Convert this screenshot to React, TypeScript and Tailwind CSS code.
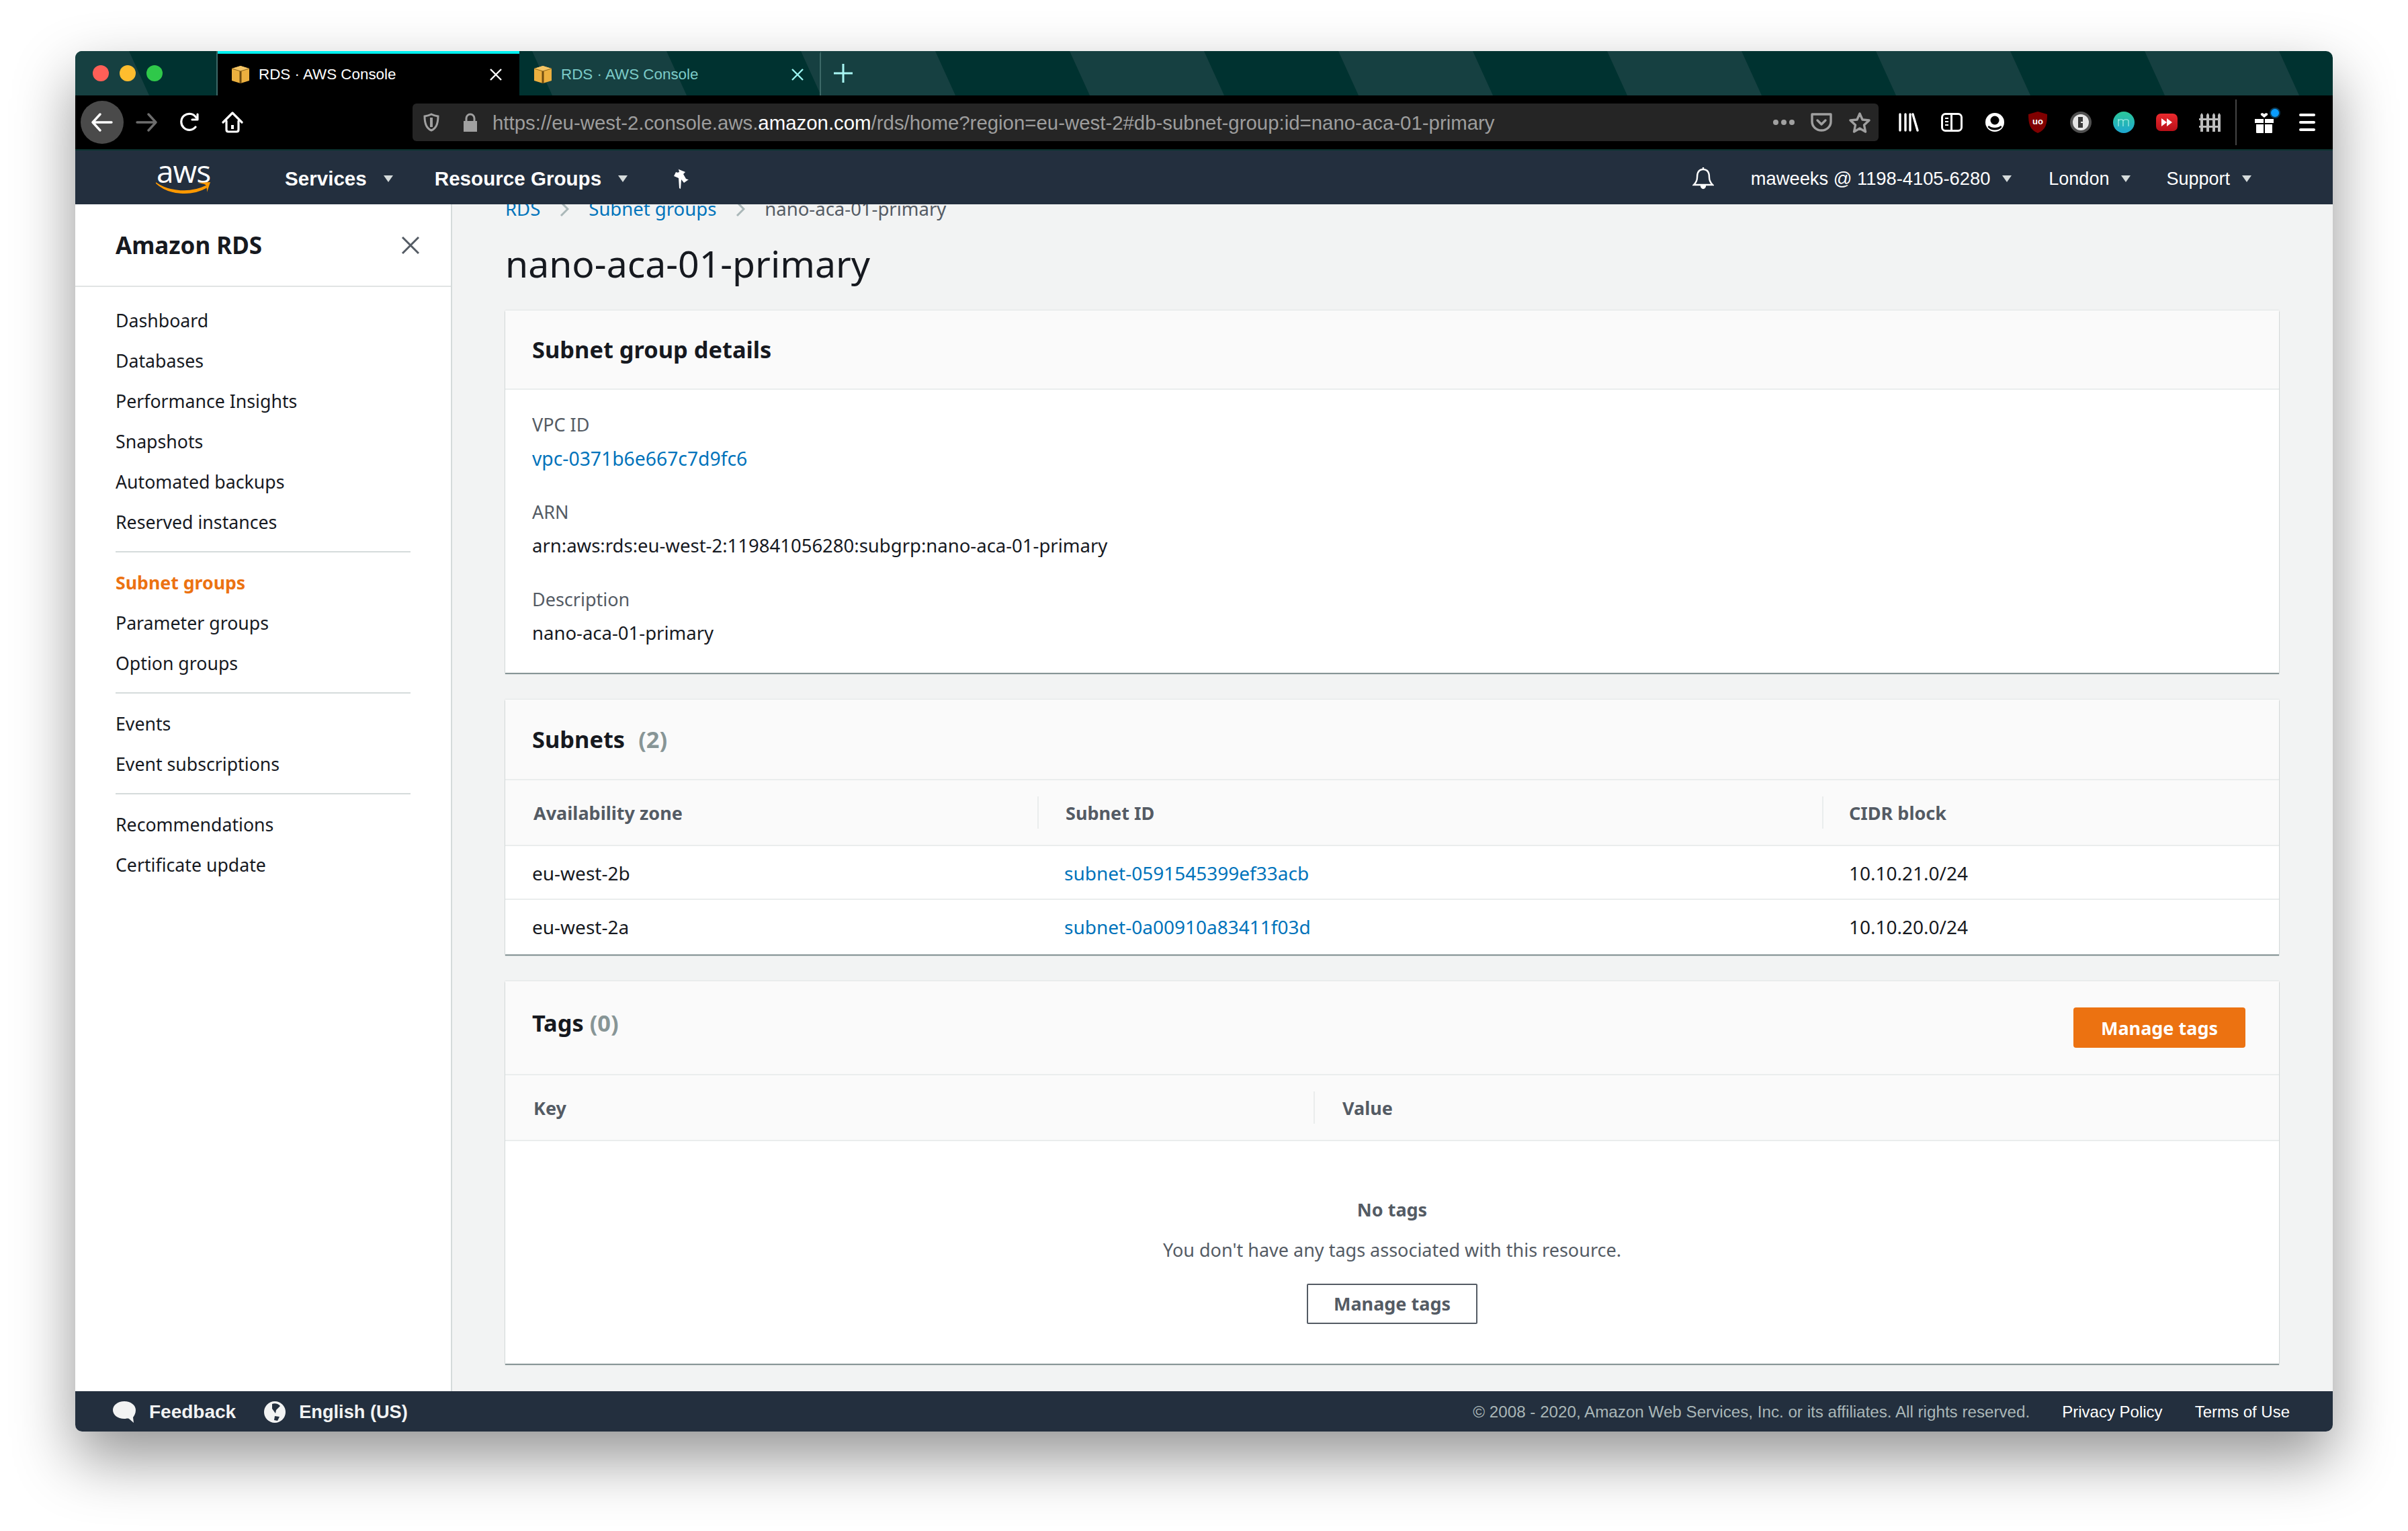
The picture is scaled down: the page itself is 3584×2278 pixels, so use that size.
const stripes = Array.from({ length: 9 }, (_, i) => -120 + i * 400);

const sideGroups = [
  ["Dashboard", "Databases", "Performance Insights", "Snapshots", "Automated backups", "Reserved instances"],
  ["Subnet groups", "Parameter groups", "Option groups"],
  ["Events", "Event subscriptions"],
  ["Recommendations", "Certificate update"],
];

const subnets = [
  { az: "eu-west-2b", id: "subnet-0591545399ef33acb", cidr: "10.10.21.0/24" },
  { az: "eu-west-2a", id: "subnet-0a00910a83411f03d", cidr: "10.10.20.0/24" },
];

const Caret = ({ className = "" }: { className?: string }) => (
  <svg viewBox="0 0 16 10" className={`h-[10px] w-[16px] ${className}`}>
    <path d="M1 0h14L8 10z" fill="#d5dbdb" />
  </svg>
);

const BoxIcon = () => (
  <svg viewBox="0 0 28 28" className="h-[28px] w-[28px] shrink-0">
    <path d="M14 1 27 5v18l-13 4-13-4V5z" fill="#ecb03f" />
    <path d="M14 1 27 5l-13 4L1 5z" fill="#f5c565" />
    <path d="M12.500 9h3v18h-3z" fill="#6f4c10" />
    <path d="M1 5l13 4L27 5" fill="none" stroke="#8f6518" strokeWidth="1" />
  </svg>
);

const CloseIcon = ({ color }: { color: string }) => (
  <svg viewBox="0 0 20 20" className="h-[20px] w-[20px]" fill="none" stroke={color} strokeWidth="2.4">
    <path d="M2 2l16 16M18 2 2 18" />
  </svg>
);

const Tab = ({ active }: { active?: boolean }) => (
  <div
    className={`flex h-full w-[449px] items-center border-t-4 ${
      active
        ? "border-t-[#00f0f0] bg-black text-white"
        : "border-t-transparent border-r-2 border-r-[#3c6867] text-[#7ccbc8]"
    }`}
  >
    <div className={`mr-[13px] flex items-center ${active ? "ml-[20px]" : "ml-[21px]"}`}>
      <BoxIcon />
    </div>
    <span className={`font-['Liberation_Sans',sans-serif] text-[22.400px] leading-none ${active ? "w-[343px]" : "w-[342px]"}`}>RDS · AWS Console</span>
    <CloseIcon color={active ? "#ffffff" : "#9af5f2"} />
  </div>
);

const ToolSlot = ({ children }: { children: React.ReactNode }) => (
  <div className="flex h-[64px] w-[64px] items-center justify-center">{children}</div>
);

const Browser = () => (
  <>
    <div className="relative flex h-[66px] shrink-0 bg-[#003230]">
      <svg className="absolute inset-0 h-full w-full" viewBox="0 0 3360 66" preserveAspectRatio="none">
        {stripes.map((x) => (
          <polygon key={x} points={`${x},0 ${x + 200},0 ${x + 230},66 ${x + 30},66`} fill="#164041" />
        ))}
      </svg>
      <div className="relative flex h-full items-center">
        <div className="flex w-[212px] items-center gap-[16px] self-stretch border-r-2 border-[#3c6867] pl-[26px]">
          <span className="h-[24px] w-[24px] rounded-full bg-[#ff5f57]" />
          <span className="h-[24px] w-[24px] rounded-full bg-[#ffbd2e]" />
          <span className="h-[24px] w-[24px] rounded-full bg-[#2fc84a]" />
        </div>
        <Tab active />
        <Tab />
        <svg viewBox="0 0 28 28" className="ml-[19px] h-[28px] w-[28px]" stroke="#a8f6f3" strokeWidth="3">
          <path d="M14 0v28M0 14h28" />
        </svg>
      </div>
    </div>
    <div className="flex h-[80px] shrink-0 items-center bg-black pl-[8px]">
      <div className="flex h-[64px] w-[64px] items-center justify-center rounded-full bg-[#4a4a4a]">
        <svg viewBox="0 0 32 28" className="h-[28px] w-[32px]" fill="none" stroke="#fff" strokeWidth="3.4" strokeLinecap="round" strokeLinejoin="round">
          <path d="M30 14H2M13 2 2 14l11 12" />
        </svg>
      </div>
      <div className="ml-[2px]">
        <ToolSlot>
          <svg viewBox="0 0 32 28" className="h-[28px] w-[32px]" fill="none" stroke="#6d6d6d" strokeWidth="3.4" strokeLinecap="round" strokeLinejoin="round">
            <path d="M2 14h28M19 2l11 12-11 12" />
          </svg>
        </ToolSlot>
      </div>
      <ToolSlot>
        <svg viewBox="0 0 30 30" className="h-[30px] w-[30px]" fill="none" stroke="#fff" strokeWidth="3.2" strokeLinecap="round" strokeLinejoin="round">
          <path d="M24 22a12 12 0 1 1 1-14" />
          <path d="M27 3v8h-8" />
        </svg>
      </ToolSlot>
      <ToolSlot>
        <svg viewBox="0 0 32 32" className="h-[32px] w-[32px]" fill="none" stroke="#fff" strokeWidth="3.2" strokeLinecap="round" strokeLinejoin="round">
          <path d="M2 16 16 2l14 14" />
          <path d="M7 14v13c0 2 1 3 3 3h12c2 0 3-1 3-3V14" />
          <rect x="14" y="20" width="4" height="6" fill="#fff" stroke="none" />
        </svg>
      </ToolSlot>
      <div className="ml-[236px] flex h-[56px] w-[2182px] items-center rounded-[6px] bg-[#252525] pl-[16px]">
        <svg viewBox="0 0 24 28" className="h-[28px] w-[24px]" fill="none" stroke="#a0a0a0" strokeWidth="3">
          <path d="M12 2c4 2 6 2.500 10 3 0 10-2 18-10 21C4 23 2 15 2 5c4-.5 6-1 10-3z" />
          <path d="M12 7v14" strokeWidth="4" />
        </svg>
        <svg viewBox="0 0 24 28" className="ml-[34px] h-[28px] w-[24px]">
          <path d="M2 12h20v16H2z" fill="#a0a0a0" />
          <path d="M6 13V8a6 6 0 0 1 12 0v5" fill="none" stroke="#a0a0a0" strokeWidth="3" />
        </svg>
        <span className="ml-[21px] flex-1 pt-[1px] font-['Liberation_Sans',sans-serif] text-[29.400px] leading-none whitespace-nowrap text-[#9d9d9d]">
          https://eu-west-2.console.aws.<span className="text-white">amazon.com</span>/rds/home?region=eu-west-2#db-subnet-group:id=nano-aca-01-primary
        </span>
        <div className="mr-[12px] flex items-center">
          <div className="flex gap-[4px]">
            <span className="h-[8px] w-[8px] rounded-full bg-[#a0a0a0]" />
            <span className="h-[8px] w-[8px] rounded-full bg-[#a0a0a0]" />
            <span className="h-[8px] w-[8px] rounded-full bg-[#a0a0a0]" />
          </div>
          <svg viewBox="0 0 32 28" className="ml-[24px] h-[28px] w-[32px]" fill="none" stroke="#a0a0a0" strokeWidth="3.4" strokeLinecap="round" strokeLinejoin="round">
            <path d="M2 2h28v11a14 13 0 0 1-28 0z" />
            <path d="M10 11l6 6 6-6" />
          </svg>
          <svg viewBox="0 0 32 32" className="ml-[25px] h-[32px] w-[32px]" fill="none" stroke="#a0a0a0" strokeWidth="3.4" strokeLinejoin="round">
            <path d="M16 3l4 9 10 1-7.500 7 2 10-8.500-5-8.500 5 2-10L2 13l10-1z" />
          </svg>
        </div>
      </div>
      <div className="ml-[13px] flex items-center">
        <ToolSlot>
          <svg viewBox="0 0 30 28" className="h-[28px] w-[30px]" fill="none" stroke="#fff" strokeWidth="3.4" strokeLinecap="round">
            <path d="M2 2v24M10 2v24M17 2v24M21 2l7 24" />
          </svg>
        </ToolSlot>
        <ToolSlot>
          <svg viewBox="0 0 32 28" className="h-[28px] w-[32px]" fill="none" stroke="#fff" strokeWidth="3">
            <rect x="1.500" y="1.500" width="29" height="25" rx="5" />
            <path d="M15.500 2v24" />
            <path d="M6 8h5M6 13h5M6 18h5" strokeWidth="2" />
          </svg>
        </ToolSlot>
        <ToolSlot>
          <svg viewBox="0 0 28 28" className="h-[28px] w-[28px]" fill="#fff">
            <circle cx="14" cy="14" r="14" />
            <circle cx="14" cy="11" r="6.500" fill="#000" />
            <path d="M5 19c4 4 14 4 18 0l1.500 2c-5 6-16 6-21 0z" fill="#000" />
          </svg>
        </ToolSlot>
        <ToolSlot>
          <svg viewBox="0 0 28 32" className="h-[32px] w-[28px]">
            <path d="M14 0l14 4c0 14-2 23-14 28C2 27 0 18 0 4z" fill="#800000" />
            <text x="14" y="19" textAnchor="middle" fontSize="13" fontWeight="700" fill="#fff" fontFamily="Liberation Sans">uo</text>
          </svg>
        </ToolSlot>
        <ToolSlot>
          <svg viewBox="0 0 32 32" className="h-[32px] w-[32px]">
            <circle cx="16" cy="16" r="16" fill="#505050" />
            <circle cx="16" cy="16" r="12" fill="#e6e6e6" />
            <path d="M12 8h7v7h-3v2h3v7h-7z" fill="#3a3a3a" />
          </svg>
        </ToolSlot>
        <ToolSlot>
          <svg viewBox="0 0 32 32" className="h-[32px] w-[32px]">
            <defs>
              <linearGradient id="mDisc" x1="0" y1="0" x2="0" y2="1">
                <stop offset="0" stopColor="#2cc79a" />
                <stop offset="1" stopColor="#1ea7d0" />
              </linearGradient>
            </defs>
            <circle cx="16" cy="16" r="16" fill="url(#mDisc)" />
            <path d="M8 22v-11M8 14c1-3 7-3 7 0v8M15 14c1-3 8-3 8 0v8" fill="none" stroke="#a8eee8" strokeWidth="1.200" />
          </svg>
        </ToolSlot>
        <ToolSlot>
          <svg viewBox="0 0 32 26" className="h-[26px] w-[32px]">
            <defs>
              <linearGradient id="ytRed" x1="0" y1="0" x2="0" y2="1">
                <stop offset="0" stopColor="#ec2a2e" />
                <stop offset="1" stopColor="#b80f18" />
              </linearGradient>
            </defs>
            <rect width="32" height="26" rx="7" fill="url(#ytRed)" />
            <path d="M8 7l8 6-8 6zM16 7l8 6-8 6z" fill="#fff" />
          </svg>
        </ToolSlot>
        <ToolSlot>
          <svg viewBox="0 0 32 28" className="h-[28px] w-[32px]" fill="#bdbdbd">
            <path d="M2 3l2-3 2 3v25H2zM11 3l2-3 2 3v25h-4zM20 3l2-3 2 3v25h-4zM28 3l2-3 2 3v25h-4zM0 8h32v3H0zM0 19h32v3H0z" />
          </svg>
        </ToolSlot>
        <div className="ml-[6px] h-[68px] w-[2px] bg-[#444444]" />
        <div className="relative ml-[9px] flex h-[64px] w-[64px] items-center justify-center">
          <svg viewBox="0 0 28 30" className="mt-[2px] h-[30px] w-[28px]" fill="#fff">
            <path d="M0 9h13v6H0zM15 9h13v6H15zM2 17h11v13H3c-1 0-1-1-1-1zM15 17h11v12s0 1-1 1H15z" />
            <path d="M14 7C10 4 8 3 9 1c1-1 4-1 5 1 1-2 4-2 5-1 1 2-1 3-5 6z" />
          </svg>
          <span className="absolute right-[10px] top-[12px] h-[12px] w-[12px] rounded-full bg-[#0a9dff] shadow-[0_0_0_2px_#0c3a55]" />
        </div>
        <div className="flex w-[64px] flex-col items-center gap-[7px]">
          <span className="h-[4px] w-[24px] rounded-full bg-white" />
          <span className="h-[4px] w-[24px] rounded-full bg-white" />
          <span className="h-[4px] w-[24px] rounded-full bg-white" />
        </div>
      </div>
    </div>
  </>
);

const TopNav = () => (
  <div className="relative z-10 flex h-[82px] shrink-0 items-center border-t-2 border-[#0b3331] bg-[#232f3e] pt-[4px] font-['Liberation_Sans',sans-serif] text-white">
    <div className="-mt-[4px] ml-[120px] flex w-[82px] flex-col items-center">
      <span className="font-['Open_Sans',sans-serif] text-[46px] leading-[30px] tracking-[-1px]">aws</span>
      <svg viewBox="0 0 82 20" className="h-[20px] w-[82px]">
        <path d="M0 3c20 14 52 16 74 5l1 2C54 22 20 22 0 3z" fill="#f90" stroke="#f90" strokeWidth="1.500" />
        <path d="M62 3l19-1-5 15c0-4 0-8-2-11-3-2-7-2-12-3z" fill="#f90" />
      </svg>
    </div>
    <span className="ml-[110px] text-[29.600px] font-bold leading-none">Services</span>
    <Caret className="ml-[24px]" />
    <span className="ml-[61px] text-[29.600px] font-bold leading-none">Resource Groups</span>
    <Caret className="ml-[24px]" />
    <svg viewBox="0 0 24 30" className="ml-[66px] h-[30px] w-[24px]" fill="#fff">
      <path d="M7 0l12 5-3 3 4 7c2 1 3 1 4 1l-7 5-4-5-1 14-2-1-1-15-7-3 3-6c2 1 3 1 5 0l-1-4z" />
    </svg>
    <div className="ml-auto flex items-center">
      <svg viewBox="0 0 32 34" className="h-[34px] w-[32px]" fill="none" stroke="#fff" strokeWidth="2.400">
        <path d="M16 3c-7 0-9 5-9 12 0 5-2 8-5 11h28c-3-3-5-6-5-11 0-7-2-12-9-12z" />
        <path d="M13 27a3 4 0 0 0 6 0" fill="#fff" />
        <path d="M16 0v3" />
      </svg>
      <span className="ml-[55px] text-[27.300px] leading-none">maweeks @ 1198-4105-6280</span>
      <Caret className="ml-[17px]" />
      <span className="ml-[54px] text-[27px] leading-none">London</span>
      <Caret className="ml-[17px]" />
      <span className="ml-[52px] text-[27px] leading-none">Support</span>
      <Caret className="ml-[17px] mr-[120px]" />
    </div>
  </div>
);

const Sidebar = () => (
  <aside className="flex w-[561px] shrink-0 flex-col border-r-2 border-[#d5dbdb] bg-white">
    <div className="flex h-[123px] shrink-0 items-center justify-between border-b-2 border-[#e1e4e4] pl-[60px] pr-[46px]">
      <span className="text-[35px] font-bold leading-none text-[#16191f]">Amazon RDS</span>
      <svg viewBox="0 0 28 28" className="h-[28px] w-[28px]" fill="none" stroke="#545b64" strokeWidth="3">
        <path d="M2 2l24 24M26 2 2 26" />
      </svg>
    </div>
    <nav className="pt-[20px]">
      {sideGroups.map((group, i) => (
        <div key={i} className={i > 0 ? "mx-[60px] mt-[13px] border-t-2 border-[#d5dbdb] pt-[15px]" : "mx-[60px]"}>
          {group.map((item) => (
            <div
              key={item}
              className={`flex h-[60px] items-center text-[26.700px] ${
                item === "Subnet groups" ? "font-bold text-[#ec7211]" : "text-[#16191f]"
              }`}
            >
              {item}
            </div>
          ))}
        </div>
      ))}
    </nav>
  </aside>
);

const Card = ({ className = "", children }: { className?: string; children: React.ReactNode }) => (
  <section className={`bg-white shadow-[0_2px_1px_#879596,0_0_2px_#c9cfcf] ${className}`}>{children}</section>
);

const Field = ({ label, children }: { label: string; children: React.ReactNode }) => (
  <div className="mb-[30px]">
    <div className="flex h-[50px] items-center text-[27px] text-[#545b64]">{label}</div>
    <div className="flex h-[50px] items-center text-[27.500px] text-[#16191f]">{children}</div>
  </div>
);

const HeaderCell = ({ className, children }: { className: string; children: React.ReactNode }) => (
  <div className={`flex items-center text-[27px] font-bold text-[#545b64] ${className}`}>{children}</div>
);

const Chevron = () => (
  <svg viewBox="0 0 14 24" className="mx-[29px] h-[24px] w-[14px]" fill="none" stroke="#aab7b8" strokeWidth="3">
    <path d="M2 2l10 10L2 22" />
  </svg>
);

const Main = () => (
  <main className="relative flex-1 overflow-hidden bg-[#f2f3f3] pl-[79px] pr-[80px]">
    <div className="-mt-[8px] flex h-[30px] items-center text-[27.500px] leading-none">
      <span className="text-[#0073bb]">RDS</span>
      <Chevron />
      <span className="text-[#0073bb]">Subnet groups</span>
      <Chevron />
      <span className="text-[#545b64]">nano-aca-01-primary</span>
    </div>
    <h1 className="mt-[26px] h-[80px] text-[55.300px] font-normal leading-[80px] text-[#16191f]">nano-aca-01-primary</h1>
    <div className="mt-[30px] flex flex-col gap-[40px]">
      <Card className="h-[539px]">
        <div className="flex h-[118px] items-center border-b-2 border-[#eaeded] bg-[#fafafa] pl-[40px] text-[34.400px] font-bold text-[#16191f]">
          Subnet group details
        </div>
        <div className="pl-[40px] pt-[27px]">
          <Field label="VPC ID">
            <span className="text-[28.300px] text-[#0073bb]">vpc-0371b6e667c7d9fc6</span>
          </Field>
          <Field label="ARN">arn:aws:rds:eu-west-2:119841056280:subgrp:nano-aca-01-primary</Field>
          <Field label="Description">nano-aca-01-primary</Field>
        </div>
      </Card>
      <Card className="h-[379px]">
        <div className="flex h-[120px] items-center border-b-2 border-[#eaeded] bg-[#fafafa] pl-[40px] text-[34.400px] font-bold text-[#16191f]">
          Subnets <span className="ml-[20px] text-[#879596]">(2)</span>
        </div>
        <div className="flex h-[98px] items-center border-b-2 border-[#eaeded] bg-[#fafafa]">
          <HeaderCell className="h-[48px] w-[794px] border-r-2 border-[#eaeded] pl-[42px] pt-[3px]">Availability zone</HeaderCell>
          <HeaderCell className="h-[48px] w-[1168px] border-r-2 border-[#eaeded] pl-[40px] pt-[3px]">Subnet ID</HeaderCell>
          <HeaderCell className="h-[48px] pl-[38px] pt-[3px]">CIDR block</HeaderCell>
        </div>
        {subnets.map((s, i) => (
          <div key={s.id} className={`flex h-[80px] items-center text-[28px] text-[#16191f] ${i === 0 ? "border-b-2 border-[#eaeded] pt-[2px]" : ""}`}>
            <div className="w-[794px] pl-[40px]">{s.az}</div>
            <div className="w-[1168px] pl-[38px] text-[#0073bb]">{s.id}</div>
            <div className="pl-[38px]">{s.cidr}</div>
          </div>
        ))}
      </Card>
      <Card className="h-[569px]">
        <div className="relative h-[140px] border-b-2 border-[#eaeded] bg-[#fafafa] pl-[40px] pr-[50px] pt-[39px]">
          <div className="text-[34.400px] font-bold leading-[46px] text-[#16191f]">
            Tags <span className="text-[#879596]">(0)</span>
          </div>
          <button className="absolute right-[50px] top-[39px] flex h-[60px] w-[256px] items-center justify-center rounded-[4px] bg-[#ec7211] pt-[2px] text-[27px] font-bold text-white">
            Manage tags
          </button>
        </div>
        <div className="flex h-[98px] items-center border-b-2 border-[#eaeded] bg-[#fafafa]">
          <HeaderCell className="h-[48px] w-[1205px] border-r-2 border-[#eaeded] pl-[42px] pt-[3px]">Key</HeaderCell>
          <HeaderCell className="h-[48px] pl-[41px] pt-[3px]">Value</HeaderCell>
        </div>
        <div className="flex flex-col items-center pt-[82px] text-[27px] text-[#545b64]">
          <div className="h-[40px] font-bold leading-[40px]">No tags</div>
          <div className="mt-[20px] h-[40px] leading-[40px]">You don't have any tags associated with this resource.</div>
          <button className="mt-[30px] flex h-[60px] w-[254px] items-center justify-center rounded-[2px] border-2 border-[#545b64] bg-white font-bold text-[#545b64]">
            Manage tags
          </button>
        </div>
      </Card>
    </div>
  </main>
);

const Footer = () => (
  <footer className="relative z-10 flex h-[60px] shrink-0 items-center rounded-b-[10px] bg-[#232f3e] pt-[2px] font-['Liberation_Sans',sans-serif]">
    <svg viewBox="0 0 34 32" className="ml-[56px] h-[32px] w-[34px]" fill="#f2f3f3">
      <path d="M17 0C7 0 0 6 0 13s7 13 17 13c3 0 5-1 7 0l7 6-1-8c2-3 4-6 4-11C34 6 27 0 17 0z" />
    </svg>
    <span className="ml-[20px] text-[28px] font-bold leading-none text-[#f2f3f3]">Feedback</span>
    <svg viewBox="0 0 32 32" className="ml-[42px] h-[32px] w-[32px]">
      <circle cx="16" cy="16" r="16" fill="#f2f3f3" />
      <path d="M12 4c4-2 10 0 12 3l-6 6-1 5-5-7zM16 22l7 1-3 6-5-1z" fill="#232f3e" />
    </svg>
    <span className="ml-[20px] text-[27.200px] font-bold leading-none text-[#f2f3f3]">English (US)</span>
    <span className="ml-auto text-[24.200px] leading-none text-[#aab7b8]">© 2008 - 2020, Amazon Web Services, Inc. or its affiliates. All rights reserved.</span>
    <span className="ml-[48px] text-[24px] leading-none text-white">Privacy Policy</span>
    <span className="ml-[48px] mr-[64px] text-[24px] leading-none text-white">Terms of Use</span>
  </footer>
);

const App = () => {
  return (
    <div className="h-[2278px] w-[3584px] overflow-hidden bg-white pl-[112px] pt-[76px] font-['Noto_Sans',sans-serif]">
      <div className="flex h-[2054px] w-[3360px] flex-col rounded-[10px] shadow-[0_40px_90px_rgba(0,0,0,0.42)]">
        <div className="flex flex-col overflow-hidden rounded-t-[10px]">
          <Browser />
        </div>
        <TopNav />
        <div className="flex min-h-0 flex-1 overflow-hidden">
          <Sidebar />
          <Main />
        </div>
        <Footer />
      </div>
    </div>
  );
};

export default App;
